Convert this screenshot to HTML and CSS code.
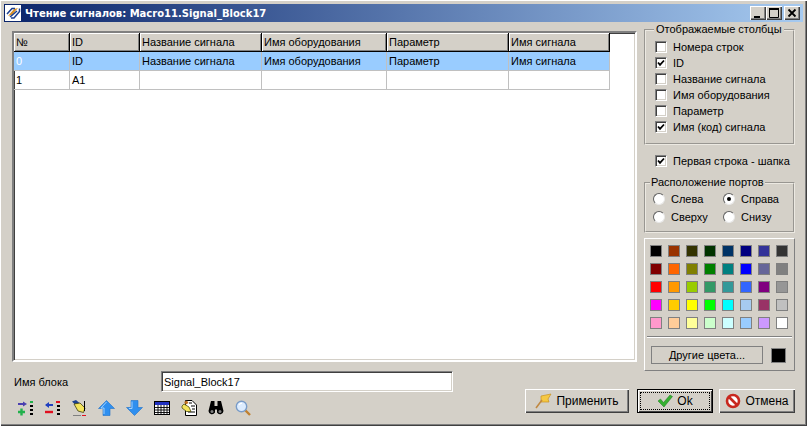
FILE: index.html
```html
<!DOCTYPE html>
<html lang="ru">
<head>
<meta charset="utf-8">
<title>Чтение сигналов</title>
<link rel="stylesheet" href="styles.css">
</head>
<body>
<div class="window">
  <header class="titlebar">
    <svg class="app-icon" width="16" height="16" viewBox="0 0 16 16"><rect width="16" height="16" fill="#fff"/><path d="M3 11L9 4L13 3L7 10Z" fill="#d89028"/><path d="M2 9L7 3.5H10M6 13H9L14.5 6.5V3.5M5 12L12 6" stroke="#1c3f8f" stroke-width="1.5" fill="none"/></svg>
    <span class="title-text">Чтение сигналов: Macro11.Signal_Block17</span>
    <div class="title-buttons">
      <span class="tbtn"><svg width="14" height="12" viewBox="0 0 14 12"><rect x="3" y="9" width="6" height="2" fill="#000"/></svg></span>
      <span class="tbtn"><svg width="14" height="12" viewBox="0 0 14 12"><path d="M2.5 2.5H11.5V10.5H2.5Z" fill="none" stroke="#000"/><rect x="2" y="1" width="10" height="2" fill="#000"/></svg></span>
      <span class="tbtn close"><svg width="14" height="12" viewBox="0 0 14 12"><path d="M3.5 2.5 L10.5 9.5 M10.5 2.5 L3.5 9.5" stroke="#000" stroke-width="1.8"/></svg></span>
    </div>
  </header>

  <main class="content">
    <div class="upper">
      <div class="grid-box">
        <table class="grid">
          <colgroup><col class="c1"><col class="c2"><col class="c3"><col class="c4"><col class="c5"><col class="c6"></colgroup>
          <thead>
            <tr><th>№</th><th>ID</th><th>Название сигнала</th><th>Имя оборудования</th><th>Параметр</th><th>Имя сигнала</th></tr>
          </thead>
          <tbody>
            <tr class="selected"><td class="cur">0</td><td>ID</td><td>Название сигнала</td><td>Имя оборудования</td><td>Параметр</td><td>Имя сигнала</td></tr>
            <tr><td>1</td><td>A1</td><td></td><td></td><td></td><td></td></tr>
          </tbody>
        </table>
      </div>

      <aside class="side">
        <fieldset class="group columns">
          <legend>Отображаемые столбцы</legend>
          <div class="check-row"><span class="check"></span>Номера строк</div>
          <div class="check-row"><span class="check"><svg width="8" height="8" viewBox="0 0 8 8"><path d="M1 3.5 L3 5.8 L7 1.5" fill="none" stroke="#000" stroke-width="1.8"/></svg></span>ID</div>
          <div class="check-row"><span class="check"></span>Название сигнала</div>
          <div class="check-row"><span class="check"></span>Имя оборудования</div>
          <div class="check-row"><span class="check"></span>Параметр</div>
          <div class="check-row"><span class="check"><svg width="8" height="8" viewBox="0 0 8 8"><path d="M1 3.5 L3 5.8 L7 1.5" fill="none" stroke="#000" stroke-width="1.8"/></svg></span>Имя (код) сигнала</div>
        </fieldset>

        <div class="check-row header-check"><span class="check"><svg width="8" height="8" viewBox="0 0 8 8"><path d="M1 3.5 L3 5.8 L7 1.5" fill="none" stroke="#000" stroke-width="1.8"/></svg></span>Первая строка - шапка</div>

        <fieldset class="group ports">
          <legend>Расположение портов</legend>
          <div class="radio-grid">
            <div class="radio-row"><span class="radio"></span>Слева</div>
            <div class="radio-row"><span class="radio on"></span>Справа</div>
            <div class="radio-row"><span class="radio"></span>Сверху</div>
            <div class="radio-row"><span class="radio"></span>Снизу</div>
          </div>
        </fieldset>

        <section class="colors">
          <div class="swatches">
            <i class="sw" style="background:#000000"></i><i class="sw" style="background:#993300"></i><i class="sw" style="background:#333300"></i><i class="sw" style="background:#003300"></i><i class="sw" style="background:#003366"></i><i class="sw" style="background:#000080"></i><i class="sw" style="background:#333399"></i><i class="sw" style="background:#333333"></i>
            <i class="sw" style="background:#800000"></i><i class="sw" style="background:#ff6600"></i><i class="sw" style="background:#808000"></i><i class="sw" style="background:#008000"></i><i class="sw" style="background:#008080"></i><i class="sw" style="background:#0000ff"></i><i class="sw" style="background:#666699"></i><i class="sw" style="background:#808080"></i>
            <i class="sw" style="background:#ff0000"></i><i class="sw" style="background:#ff9900"></i><i class="sw" style="background:#99cc00"></i><i class="sw" style="background:#339966"></i><i class="sw" style="background:#339999"></i><i class="sw" style="background:#3366ff"></i><i class="sw" style="background:#800080"></i><i class="sw" style="background:#969696"></i>
            <i class="sw" style="background:#ff00ff"></i><i class="sw" style="background:#ffcc00"></i><i class="sw" style="background:#ffff00"></i><i class="sw" style="background:#00ff00"></i><i class="sw" style="background:#00ffff"></i><i class="sw" style="background:#a6caf0"></i><i class="sw" style="background:#993366"></i><i class="sw" style="background:#c0c0c0"></i>
            <i class="sw" style="background:#ff99cc"></i><i class="sw" style="background:#ffcc99"></i><i class="sw" style="background:#ffff99"></i><i class="sw" style="background:#ccffcc"></i><i class="sw" style="background:#ccffff"></i><i class="sw" style="background:#99ccff"></i><i class="sw" style="background:#cc99ff"></i><i class="sw" style="background:#ffffff"></i>
          </div>
          <hr class="sep">
          <div class="more-row">
            <button class="more" type="button">Другие цвета...</button>
            <span class="current-color"></span>
          </div>
        </section>
      </aside>
    </div>

    <div class="lower">
      <div class="lower-left">
        <div class="name-row">
          <label class="name-label">Имя блока</label>
          <input class="name-input" type="text" value="Signal_Block17">
        </div>
        <div class="toolbar">
          <svg width="16" height="16" viewBox="0 0 16 16"><path d="M1 4H8" stroke="#4b3fb0" stroke-width="2"/><path d="M6 1.5L10 4L6 6.5Z" fill="#4b3fb0"/><path d="M1 12H8M4.5 8.5V15.5" stroke="#22b14c" stroke-width="2.4"/><path d="M13 2H16" stroke="#22b14c" stroke-width="2"/><path d="M13 6H16M13 10H16M13 14H16" stroke="#000" stroke-width="2"/></svg>
          <svg width="16" height="16" viewBox="0 0 16 16"><path d="M2 5H9" stroke="#2040c0" stroke-width="2"/><path d="M5 2L1 5L5 8Z" fill="#2040c0"/><path d="M1 12H9" stroke="#e01020" stroke-width="2.4"/><path d="M12 2H16" stroke="#e01020" stroke-width="2"/><path d="M13 6H16M13 10H16M13 14H16" stroke="#000" stroke-width="2"/></svg>
          <svg width="16" height="16" viewBox="0 0 16 16"><path d="M1 1.5L5 0L9 3.5L6 6.5Z" fill="#1c3f8f"/><path d="M3 4L9 3L14 8L12.5 12.5L7 11Z" fill="#f4e45c" stroke="#404010" stroke-width=".8"/><path d="M13.5 1V11" stroke="#000"/><path d="M2 15.5H10" stroke="#808080"/><path d="M11 15.5H15" stroke="#e01020"/></svg>
          <svg width="17" height="16" viewBox="0 0 17 16"><path d="M8.5 .5L16.5 8.5H12V15.5H5V8.5H.5Z" fill="#2f8fef" stroke="#1f70c8" stroke-width=".6"/><path d="M8.5 2L3 8H6V14" fill="none" stroke="#9fd0ff"/></svg>
          <svg width="17" height="16" viewBox="0 0 17 16"><path d="M5 .5H12V7.5H16.5L8.5 15.5L.5 7.5H5Z" fill="#2f8fef" stroke="#1f70c8" stroke-width=".6"/><path d="M6 1.5V8.5H3" fill="none" stroke="#9fd0ff"/></svg>
          <svg width="16" height="16" viewBox="0 0 16 16"><rect x=".5" y="1.5" width="15" height="13" fill="#fff" stroke="#000"/><rect x="1" y="2" width="14" height="3" fill="#2030c0"/><path d="M1 7.5H15M1 10H15M1 12.5H15M4 5V14M7 5V14M10 5V14M13 5V14" stroke="#000" stroke-width=".9"/></svg>
          <svg width="16" height="16" viewBox="0 0 16 16"><path d="M4.5 .5H11L15.5 5V15.5H4.5Z" fill="#fff" stroke="#000"/><path d="M8 3H11M10 6H14M11 9H14M7 12H14" stroke="#000"/><path d="M1 6L3 4L8 7L10 11.5L5.5 11.5L1 8Z" fill="#f4e45c" stroke="#505010" stroke-width=".8"/><path d="M3 2L6 .5L7.5 3L5 4.5Z" fill="#c07020"/></svg>
          <svg width="16" height="16" viewBox="0 0 16 16"><path d="M3 1H6.5V6H9.5V1H13L15.5 11A3.5 3.5 0 0 1 9 12.5V9.5H7V12.5A3.5 3.5 0 0 1 .5 11Z" fill="#000"/><circle cx="4" cy="11.5" r="1.5" fill="#808080"/><circle cx="12" cy="11.5" r="1.5" fill="#808080"/></svg>
          <svg width="17" height="16" viewBox="0 0 17 16"><path d="M10 10L15 15" stroke="#c08030" stroke-width="2.4"/><circle cx="6.5" cy="6.5" r="5.2" fill="#dcecff" stroke="#7a9cc8" stroke-width="1.4"/><path d="M4 5A3 3 0 0 1 7 3.5" stroke="#fff" fill="none" stroke-width="1.2"/></svg>
        </div>
      </div>
      <div class="actions">
        <button class="btn" type="button">
          <svg width="17" height="16" viewBox="0 0 17 16"><path d="M6 3L16 1L13 6L14 9L6 9Z" fill="#f5c842" stroke="#c89020" stroke-width=".7"/><path d="M7 7L1 15" stroke="#c08840" stroke-width="1.6"/></svg>
          <span>Применить</span>
        </button>
        <button class="btn default" type="button">
          <span class="focus">
            <svg width="16" height="16" viewBox="0 0 16 16"><path d="M1 8L3.5 6L6.5 9.5L13 2L15.5 3.5L7 14Z" fill="#34b030" stroke="#1d7a1d" stroke-width=".5"/></svg>
            <span>Ok</span>
          </span>
        </button>
        <button class="btn" type="button">
          <svg width="16" height="16" viewBox="0 0 16 16"><circle cx="8" cy="8" r="6" fill="#fff" stroke="#c8281e" stroke-width="2.6"/><path d="M4 4L12 12" stroke="#c8281e" stroke-width="2.6"/></svg>
          <span>Отмена</span>
        </button>
      </div>
    </div>
  </main>
</div>
</body>
</html>
```

FILE: styles.css
```css
* { box-sizing: border-box; }
html, body { margin: 0; padding: 0; }
body {
  width: 807px;
  height: 426px;
  overflow: hidden;
  font-family: "Liberation Sans", Arial, sans-serif;
  font-size: 11px;
  color: #000;
  background: #d4d0c8;
}
.window {
  width: 807px;
  height: 426px;
  padding: 4px;
  background: #d4d0c8;
  box-shadow: inset 1px 1px 0 #fff, inset -1px -1px 0 #404040, inset -2px -2px 0 #808080;
}
.titlebar {
  height: 18px;
  display: flex;
  align-items: center;
  padding: 0 3px 0 1px;
  background: linear-gradient(90deg, #0a246a, #a6caf0);
}
.app-icon { flex: none; }
.title-text {
  margin-left: 4px;
  color: #fff;
  font-family: "DejaVu Sans", sans-serif;
  font-size: 10px;
  font-weight: bold;
  white-space: nowrap;
}
.title-buttons { margin-left: auto; display: flex; }
.tbtn {
  width: 16px;
  height: 14px;
  display: flex;
  align-items: center;
  justify-content: center;
  background: #d4d0c8;
  box-shadow: inset 1px 1px 0 #fff, inset -1px -1px 0 #404040, inset -2px -2px 0 #808080;
}
.tbtn.close { margin-left: 2px; }

.content { padding: 9px 8px 0; }
.upper { display: flex; gap: 7px; align-items: flex-start; }
.grid-box {
  flex: none;
  width: 625px;
  height: 331px;
  background: #fff;
  border: 2px solid;
  border-color: #808080 #fff #fff #808080;
  box-shadow: inset 1px 1px 0 #404040, inset -1px -1px 0 #d4d0c8;
}
.grid {
  table-layout: fixed;
  width: 596px;
  border-collapse: separate;
  border-spacing: 0;
}
.c1 { width: 56px; } .c2 { width: 70px; } .c3 { width: 122px; }
.c4 { width: 125px; } .c5 { width: 122px; } .c6 { width: 101px; }
.grid th, .grid td {
  height: 19px;
  padding: 0 0 0 2px;
  font-weight: normal;
  text-align: left;
  white-space: nowrap;
  overflow: hidden;
}
.grid th {
  background: #d4d0c8;
  border-right: 1px solid #000;
  border-bottom: 1px solid #000;
  box-shadow: inset 1px 1px 0 #fff, inset -1px -1px 0 #808080;
}
.grid td {
  border-right: 1px solid #c0c0c0;
  border-bottom: 1px solid #c0c0c0;
}
.selected td { background: #99ccff; }
.selected td.cur { color: #fff; }

.side { width: 151px; display: flex; flex-direction: column; margin-top: -8px; }
.group {
  margin: 0;
  padding: 0 0 0 9px;
  border: 2px groove #ece9e2;
  min-width: 0;
}
.group legend { padding: 0 2px; line-height: 13px; white-space: nowrap; }
.columns { height: 122px; padding-top: 3px; }
.columns legend { margin-left: -1px; }
.check-row { display: flex; align-items: center; height: 16px; white-space: nowrap; }
.check {
  flex: none;
  width: 12px;
  height: 12px;
  margin-right: 6px;
  display: flex;
  align-items: center;
  justify-content: center;
  background: #fff;
  border: 1px solid;
  border-color: #808080 #fff #fff #808080;
  box-shadow: inset 1px 1px 0 #404040, inset -1px -1px 0 #d4d0c8;
}
.header-check { margin: 8px 0 0 11px; }
.ports { height: 57px; margin-top: 7px; padding-left: 7px; }
.ports legend { margin-left: -3px; padding: 0 1px; }
.radio-grid { display: grid; grid-template-columns: 70px 70px; grid-auto-rows: 18px; margin-top: 1px; }
.radio-row { display: flex; align-items: center; white-space: nowrap; }
.radio {
  flex: none;
  width: 12px;
  height: 12px;
  margin-right: 6px;
  border-radius: 50%;
  background: #fff;
  border: 1px solid;
  border-color: #606060 #e8e8e8 #e8e8e8 #606060;
  display: flex;
  align-items: center;
  justify-content: center;
}
.radio.on::before { content: ""; width: 4px; height: 4px; border-radius: 50%; background: #000; }

.colors {
  height: 133px;
  margin-top: 5px;
  padding: 6px 5px 0;
  border: 1px solid;
  border-color: #fff #808080 #808080 #fff;
}
.swatches { display: grid; grid-template-columns: repeat(8, 12px); grid-auto-rows: 12px; gap: 6px; }
.sw { display: block; border: 1px solid #808080; }
.sep { height: 2px; margin: 7px -3px 0; border: 0; border-top: 1px solid #808080; border-bottom: 1px solid #fff; }
.more-row { display: flex; align-items: center; margin-top: 8px; }
.more {
  width: 112px;
  height: 18px;
  margin: 0 0 0 1px;
  padding: 0;
  font: inherit;
  color: #000;
  background: #d4d0c8;
  border: 1px solid #808080;
}
.current-color { width: 15px; height: 15px; margin-left: 8px; background: #000; border: 1px solid #808080; }

.lower { display: flex; justify-content: space-between; align-items: flex-start; }
.name-row { display: flex; align-items: center; height: 21px; }
.name-label { width: 149px; padding-left: 2px; }
.name-input {
  width: 292px;
  height: 21px;
  padding: 0 2px;
  font: inherit;
  color: #000;
  background: #fff;
  border: 1px solid;
  border-color: #808080 #fff #fff #808080;
  outline: none;
  box-shadow: inset 1px 1px 0 #404040, inset -1px -1px 0 #d4d0c8;
}
.toolbar { display: flex; align-items: center; gap: 11px; margin: 8px 0 0 5px; }
.toolbar svg { flex: none; display: block; }
.actions { display: flex; gap: 8px; margin-top: 18px; }
.btn {
  width: 104px;
  height: 24px;
  padding: 0;
  display: flex;
  align-items: center;
  justify-content: center;
  gap: 4px;
  font: inherit;
  font-size: 12px;
  color: #000;
  background: #d4d0c8;
  border: 0;
  box-shadow: inset 1px 1px 0 #fff, inset -1px -1px 0 #404040, inset -2px -2px 0 #808080;
}
.btn + .btn { width: 76px; }
.btn.default { border: 1px solid #000; box-shadow: inset 1px 1px 0 #fff, inset -1px -1px 0 #404040; }
.focus {
  width: 70px;
  height: 18px;
  display: flex;
  align-items: center;
  justify-content: center;
  gap: 4px;
  border: 1px dotted #000;
}
.actions .btn:last-child { margin-left: -2px; }
```
